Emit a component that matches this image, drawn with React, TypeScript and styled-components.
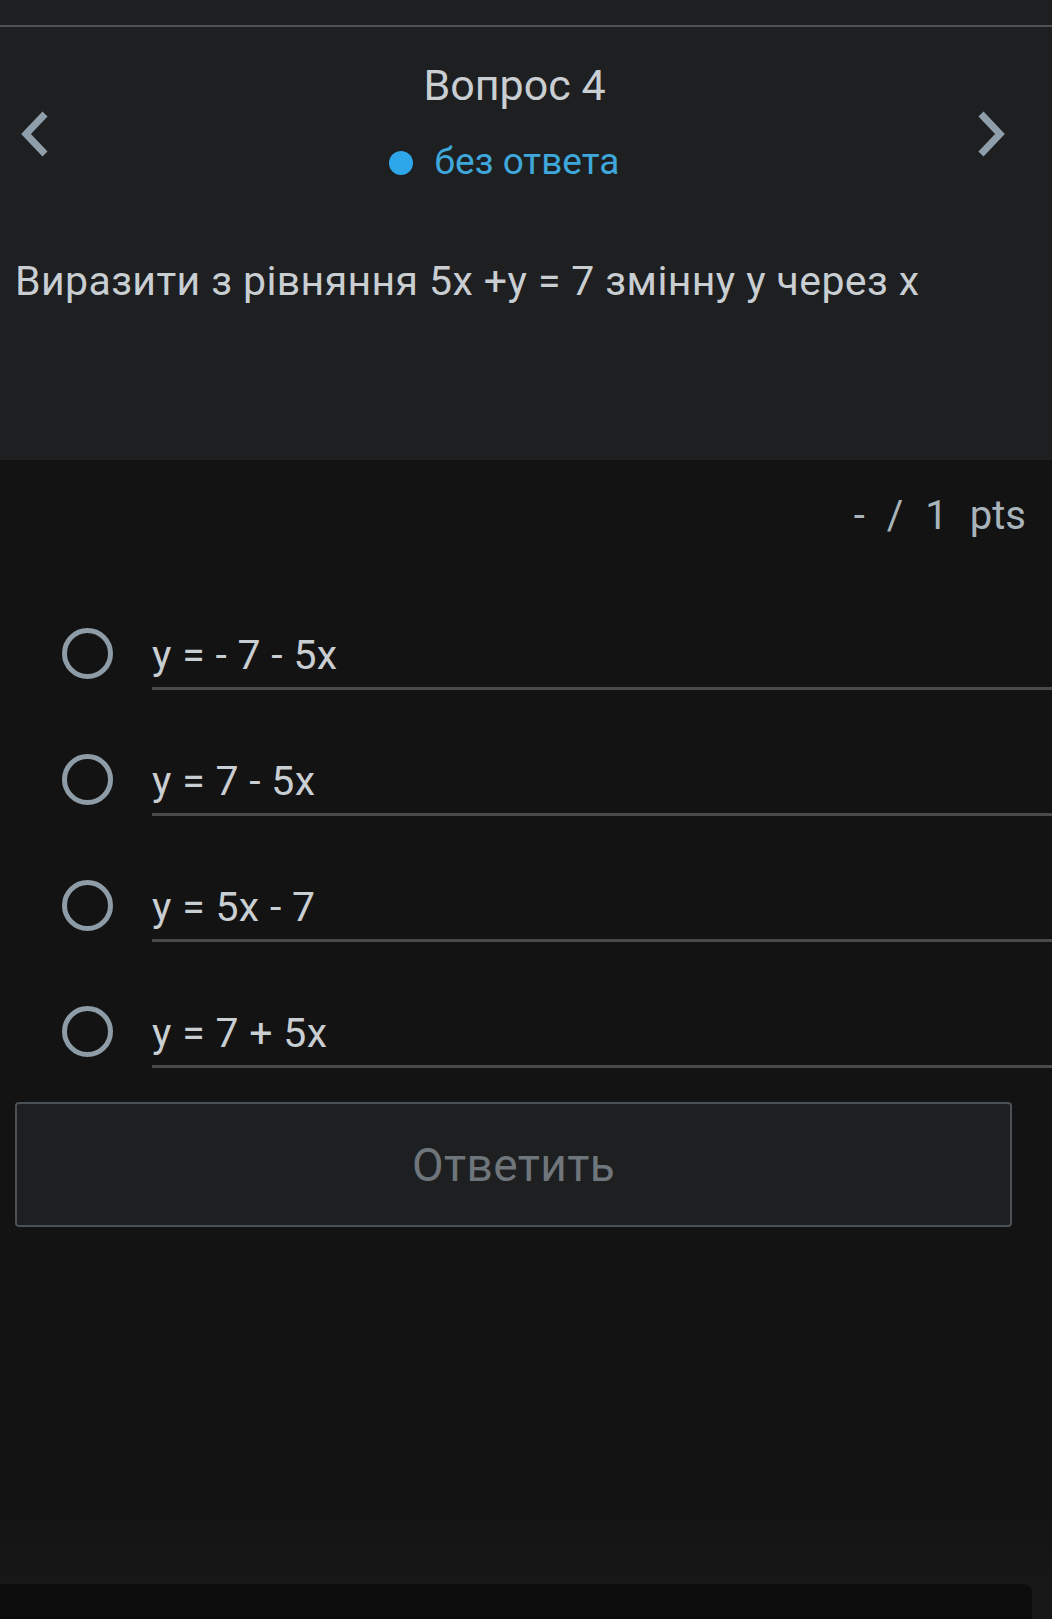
import styled, { createGlobalStyle } from 'styled-components';

const GlobalStyle = createGlobalStyle`
  html, body {
    margin: 0;
    padding: 0;
    background: #131313;
  }
  body {
    font-family: Roboto, "Noto Sans", "Liberation Sans", sans-serif;
  }
`;

const Page = styled.div`
  min-height: 1619px;
  display: flex;
  flex-direction: column;
  background: #131313;
`;

const StatusBar = styled.div`
  height: 25px;
  background: #1e1f21;
  border-bottom: 2px solid #4f5154;
`;

const Header = styled.section`
  height: 433px;
  background: #1e1f21;
  box-sizing: border-box;
  padding-top: 33px;
`;

const NavRow = styled.div`
  display: flex;
  align-items: flex-start;
  justify-content: space-between;
`;

const NavButton = styled.button<{ $side: 'left' | 'right' }>`
  border: none;
  background: transparent;
  padding: 0;
  margin-top: 50px;
  margin-${(p) => p.$side}: ${(p) => (p.$side === 'left' ? '19px' : '45px')};
  width: 32px;
  height: 48px;
  display: flex;
  align-items: center;
  justify-content: center;
  cursor: pointer;
`;

const TitleBlock = styled.div`
  display: flex;
  flex-direction: column;
  align-items: center;
  gap: 30px;
  padding-left: 3px;
`;

const Title = styled.h1`
  margin: 0;
  font-size: 43px;
  line-height: 50px;
  font-weight: 400;
  color: #c9ced2;
`;

const Status = styled.div`
  display: flex;
  align-items: center;
  gap: 22px;
  font-size: 37px;
  line-height: 44px;
  color: #3ea8dc;
  margin-left: -21px;
`;

const Dot = styled.span`
  width: 24px;
  height: 24px;
  border-radius: 50%;
  background: #2ea6ea;
  margin-top: 2px;
`;

const Question = styled.p`
  margin: 72px 0 0;
  padding-left: 15px;
  font-size: 41px;
  line-height: 50px;
  letter-spacing: 0.4px;
  color: #c9ced2;
`;

const Points = styled.div`
  margin-top: 33px;
  padding-right: 26px;
  display: flex;
  justify-content: flex-end;
  gap: 22px;
  font-size: 40px;
  line-height: 46px;
  color: #a8b3ba;
`;

const Options = styled.div`
  margin-top: 89px;
  display: flex;
  flex-direction: column;
  gap: 64px;
`;

const Option = styled.label`
  display: flex;
  align-items: flex-start;
  cursor: pointer;
`;

const Radio = styled.span`
  width: 51px;
  height: 51px;
  box-sizing: border-box;
  border-radius: 50%;
  border: 5px solid #8d9ca6;
  margin-left: 62px;
  flex-shrink: 0;
`;

const OptionText = styled.span`
  flex: 1;
  margin-left: 39px;
  padding: 3px 0 8px;
  font-size: 41px;
  line-height: 48px;
  letter-spacing: 0.3px;
  color: #c9ced2;
  border-bottom: 3px solid #484a4c;
`;

const SubmitButton = styled.button`
  margin: 34px 0 0 15px;
  width: 997px;
  height: 125px;
  box-sizing: border-box;
  border: 2px solid #4b5155;
  border-radius: 4px;
  background: #1e1f21;
  color: #6f767b;
  font-family: inherit;
  font-size: 46px;
  letter-spacing: 0.4px;
  cursor: default;
`;

const Spacer = styled.div`
  flex: 1;
  background: linear-gradient(#131313 0%, #131313 75%, #171717 100%);
`;

const BottomBar = styled.div`
  height: 35px;
  background: #171717;
  display: flex;
`;

const BottomPanel = styled.div`
  width: 1032px;
  background: #0c0c0c;
  border-top-right-radius: 9px;
`;

function Chevron({ dir }: { dir: 'left' | 'right' }) {
  const points = dir === 'left' ? '26,4 7,24 26,44' : '6,4 25,24 6,44';
  return (
    <svg width="32" height="48" viewBox="0 0 32 48">
      <polyline points={points} fill="none" stroke="#8e9fab" strokeWidth="7" strokeLinejoin="miter" />
    </svg>
  );
}

const answers = ['y = - 7 - 5x', 'y = 7 - 5x', 'y = 5x - 7', 'y = 7 + 5x'];

export default function App() {
  return (
    <>
      <GlobalStyle />
      <Page>
        <StatusBar />
        <Header>
          <NavRow>
            <NavButton $side="left" type="button" aria-label="Назад">
              <Chevron dir="left" />
            </NavButton>
            <TitleBlock>
              <Title>Вопрос 4</Title>
              <Status>
                <Dot />
                без ответа
              </Status>
            </TitleBlock>
            <NavButton $side="right" type="button" aria-label="Вперед">
              <Chevron dir="right" />
            </NavButton>
          </NavRow>
          <Question>Виразити з рівняння 5х +у = 7 змінну у через х</Question>
        </Header>
        <Points>
          <span>-</span>
          <span>/</span>
          <span>1</span>
          <span>pts</span>
        </Points>
        <Options>
          {answers.map((a) => (
            <Option key={a}>
              <Radio />
              <OptionText>{a}</OptionText>
            </Option>
          ))}
        </Options>
        <SubmitButton type="button">Ответить</SubmitButton>
        <Spacer />
        <BottomBar>
          <BottomPanel />
        </BottomBar>
      </Page>
    </>
  );
}
